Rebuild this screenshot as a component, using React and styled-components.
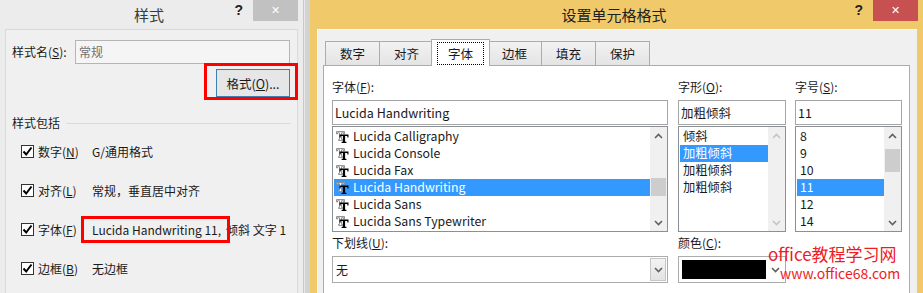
import React from "react";
import styled, { createGlobalStyle } from "styled-components";

const GlobalStyle = createGlobalStyle`
  html, body { margin: 0; padding: 0; }
  body {
    width: 923px;
    height: 293px;
    overflow: hidden;
    font-family: "Noto Sans CJK SC", "Noto Sans", sans-serif;
    font-size: 12px;
    color: #1a1a1a;
  }
`;

const fontList = [
  "Lucida Calligraphy",
  "Lucida Console",
  "Lucida Fax",
  "Lucida Handwriting",
  "Lucida Sans",
  "Lucida Sans Typewriter",
];
const styleList = ["倾斜", "加粗倾斜", "加粗倾斜", "加粗倾斜"];
const sizeList = ["8", "9", "10", "11", "12", "14"];
const tabs = ["数字", "对齐", "字体", "边框", "填充", "保护"];

function Chevron({ up, color = "#606060" }) {
  return (
    <svg width="9" height="6" viewBox="0 0 9 6">
      <polyline
        points={up ? "1,5 4.5,1.5 8,5" : "1,1 4.5,4.5 8,1"}
        fill="none"
        stroke={color}
        strokeWidth="1.6"
      />
    </svg>
  );
}

function TrueTypeIcon() {
  return (
    <svg width="13" height="12" viewBox="0 0 13 12">
      <path d="M0.5 0.5h8v2.5h-1v-1.3h-2v6.8h1v1h-4v-1h1V1.7h-2V3h-1z" fill="#fff" stroke="#8a8a8a" strokeWidth="0.9" />
      <path d="M3.5 3.5h9v3h-1.2V5h-2.2v5.8h1.3V12H5.6v-1.2h1.3V5H4.7v1.5H3.5z" fill="#000" />
    </svg>
  );
}

function CheckBox() {
  return (
    <Box>
      <svg width="11" height="11" viewBox="0 0 11 11">
        <polyline points="1.5,5.5 4.2,8.5 9.5,1.5" fill="none" stroke="#000" strokeWidth="2" />
      </svg>
    </Box>
  );
}

function ScrollBar({ thumbTop, thumbHeight, disabled }) {
  const c = disabled ? "#c4c4c4" : "#606060";
  return (
    <Scroll>
      <ScrollArrow>
        <Chevron up color={c} />
      </ScrollArrow>
      <Track>
        {!disabled && <Thumb style={{ marginTop: thumbTop, height: thumbHeight }} />}
      </Track>
      <ScrollArrow>
        <Chevron color={c} />
      </ScrollArrow>
    </Scroll>
  );
}

export default function App() {
  return (
    <>
      <GlobalStyle />
      <Screen>
        <LeftWin>
          <TitleBar>
            <Title $color="#3a3a3a">样式</Title>
            <Controls>
              <Help>?</Help>
              <Close $bg="#c1c1c1">✕</Close>
            </Controls>
          </TitleBar>
          <LeftPanel>
            <NameRow>
              <NameLabel>
                样式名(<u>S</u>):
              </NameLabel>
              <NameInput>常规</NameInput>
            </NameRow>
            <ButtonRow>
              <RedFrame $pad="3px 5px 0 9px">
                <FormatButton>
                  格式(<u>O</u>)...
                </FormatButton>
              </RedFrame>
            </ButtonRow>
            <SectionHead>
              <span>样式包括</span>
              <Rule />
            </SectionHead>
            <CheckRow>
              <CheckBox />
              <CheckLabel>
                数字(<u>N</u>)
              </CheckLabel>
              <Value>G/通用格式</Value>
            </CheckRow>
            <CheckRow>
              <CheckBox />
              <CheckLabel>
                对齐(<u>L</u>)
              </CheckLabel>
              <Value>常规，垂直居中对齐</Value>
            </CheckRow>
            <CheckRow>
              <CheckBox />
              <CheckLabel>
                字体(<u>F</u>)
              </CheckLabel>
              <Value>
                <RedFrame $pad="0 0 0 8px" $shift>
                  Lucida Handwriting 11,
                </RedFrame>
                <Rest>倾斜 文字 1</Rest>
              </Value>
            </CheckRow>
            <CheckRow>
              <CheckBox />
              <CheckLabel>
                边框(<u>B</u>)
              </CheckLabel>
              <Value>无边框</Value>
            </CheckRow>
          </LeftPanel>
        </LeftWin>
        <SheetStrip />
        <RightWin>
          <TitleBar>
            <Title $color="#1e1e1e">设置单元格格式</Title>
            <Controls>
              <Help>?</Help>
              <Close $bg="#c75050">✕</Close>
            </Controls>
          </TitleBar>
          <DialogBody>
            <TabRow>
              {tabs.map((t) => (
                <Tab key={t} $active={t === "字体"}>
                  {t === "字体" ? <Focus>{t}</Focus> : t}
                </Tab>
              ))}
            </TabRow>
            <TabPanel>
              <Columns>
                <Column $w={336}>
                  <FieldLabel>
                    字体(<u>F</u>):
                  </FieldLabel>
                  <TextBox>Lucida Handwriting</TextBox>
                  <ListBox>
                    <Items>
                      {fontList.map((f, i) => (
                        <Item key={f} $sel={i === 3} $icon>
                          <TrueTypeIcon />
                          <span>{f}</span>
                        </Item>
                      ))}
                    </Items>
                    <ScrollBar thumbTop={34} thumbHeight={18} />
                  </ListBox>
                </Column>
                <Column $w={108}>
                  <FieldLabel>
                    字形(<u>O</u>):
                  </FieldLabel>
                  <TextBox>加粗倾斜</TextBox>
                  <ListBox>
                    <Items>
                      {styleList.map((s, i) => (
                        <Item key={i} $sel={i === 1}>
                          {s}
                        </Item>
                      ))}
                    </Items>
                    <ScrollBar disabled />
                  </ListBox>
                </Column>
                <Column $w={107}>
                  <FieldLabel>
                    字号(<u>S</u>):
                  </FieldLabel>
                  <TextBox>11</TextBox>
                  <ListBox>
                    <Items>
                      {sizeList.map((s) => (
                        <Item key={s} $sel={s === "11"}>
                          {s}
                        </Item>
                      ))}
                    </Items>
                    <ScrollBar thumbTop={5} thumbHeight={23} />
                  </ListBox>
                </Column>
              </Columns>
              <BottomRow>
                <Column $w={336}>
                  <BottomLabel>
                    下划线(<u>U</u>):
                  </BottomLabel>
                  <Select>
                    <SelectText>无</SelectText>
                    <DropButton>
                      <Chevron />
                    </DropButton>
                  </Select>
                </Column>
                <Column $w={108}>
                  <BottomLabel>
                    颜色(<u>C</u>):
                  </BottomLabel>
                  <Select>
                    <Swatch />
                    <DropButton $plain>
                      <Chevron />
                    </DropButton>
                  </Select>
                </Column>
              </BottomRow>
            </TabPanel>
          </DialogBody>
        </RightWin>
        <Watermark>
          <WmMain>office教程学习网</WmMain>
          <WmUrl>www.office68.com</WmUrl>
        </Watermark>
      </Screen>
    </>
  );
}

const Screen = styled.div`
  position: relative;
  display: flex;
  width: 923px;
  height: 293px;
  overflow: hidden;
`;

const LeftWin = styled.div`
  width: 303px;
  background: #ececec;
  border-right: 1px solid #c8c8c8;
  display: flex;
  flex-direction: column;
`;

const TitleBar = styled.div`
  height: 29px;
  flex: none;
  display: grid;
  grid-template-columns: 1fr auto 1fr;
  padding-right: 5px;
`;

const Title = styled.div`
  grid-column: 2;
  font-size: 15px;
  line-height: 29px;
  color: ${(p) => p.$color};
`;

const Controls = styled.div`
  grid-column: 3;
  justify-self: end;
  display: flex;
  align-items: flex-start;
`;

const Help = styled.div`
  font-family: "Liberation Sans", sans-serif;
  font-weight: bold;
  font-size: 14px;
  line-height: 20px;
  color: #222;
  margin-right: 10px;
`;

const Close = styled.div`
  width: 45px;
  height: 21px;
  background: ${(p) => p.$bg};
  color: #fff;
  font-family: "DejaVu Sans", sans-serif;
  font-size: 11px;
  font-weight: bold;
  display: flex;
  align-items: center;
  justify-content: center;
`;

const LeftPanel = styled.div`
  flex: 1;
  margin: 0 5px 0 5px;
  background: #f0f0f0;
  border: 1px solid #d9d9d9;
  border-bottom: none;
`;

const NameRow = styled.div`
  display: flex;
  align-items: center;
  margin-top: 10px;
  padding-left: 6px;
`;

const NameLabel = styled.div`
  width: 63px;
  line-height: 24px;
`;

const NameInput = styled.div`
  width: 215px;
  height: 24px;
  box-sizing: border-box;
  border: 1px solid #b5b5b5;
  background: #f5f5f5;
  color: #707070;
  padding-left: 3px;
  line-height: 22px;
`;

const ButtonRow = styled.div`
  display: flex;
  justify-content: flex-end;
  margin: -1px -1px 0 0;
`;

const RedFrame = styled.div`
  display: inline-flex;
  align-items: center;
  border: 3px solid #ff0000;
  padding: ${(p) => p.$pad};
  ${(p) =>
    p.$shift
      ? "margin-left: -11px; width: 135px; height: 21px; position: relative; z-index: 1; white-space: nowrap; overflow: visible;"
      : ""}
`;

const FormatButton = styled.div`
  width: 74px;
  height: 28px;
  box-sizing: border-box;
  border: 1px solid #3c7fb1;
  background: #e6e6e6;
  display: flex;
  align-items: center;
  justify-content: center;
  font-size: 12.5px;
`;

const SectionHead = styled.div`
  display: flex;
  align-items: center;
  gap: 6px;
  margin: 14px 6px 0 6px;
  line-height: 18px;
`;

const Rule = styled.div`
  flex: 1;
  height: 1px;
  background: #dadada;
`;

const CheckRow = styled.div`
  display: flex;
  align-items: center;
  height: 39px;
  padding-left: 15px;
  white-space: nowrap;
`;

const Box = styled.div`
  width: 13px;
  height: 13px;
  box-sizing: border-box;
  border: 1px solid #333;
  background: #fff;
  display: flex;
  align-items: center;
  justify-content: center;
`;

const CheckLabel = styled.div`
  width: 54px;
  margin-left: 4px;
  line-height: 18px;
`;

const Value = styled.div`
  display: flex;
  align-items: center;
  line-height: 18px;
`;

const Rest = styled.span`
  margin-left: -4px;
`;

const SheetStrip = styled.div`
  width: 5px;
  background: #d3d3d3;
  border-left: 1px solid #e8e8e8;
`;

const RightWin = styled.div`
  flex: 1;
  background: #f0c96b;
  display: flex;
  flex-direction: column;
`;

const DialogBody = styled.div`
  flex: 1;
  margin: 0 6px 0 7px;
  background: #f0f0f0;
  border-top: 1px solid #f8f8f8;
  border-left: 1px solid #f8f8f8;
  padding: 9px 7px 0 5px;
  display: flex;
  flex-direction: column;
`;

const TabRow = styled.div`
  display: flex;
  align-items: flex-end;
  height: 26px;
  padding-left: 2px;
`;

const Tab = styled.div`
  width: 55px;
  box-sizing: border-box;
  margin-right: -1px;
  height: ${(p) => (p.$active ? "27px" : "24px")};
  border: 1px solid #acacac;
  border-bottom: none;
  background: ${(p) => (p.$active ? "#fff" : "linear-gradient(#f2f2f2, #e4e4e4)")};
  display: flex;
  align-items: center;
  justify-content: center;
  font-size: 12.5px;
  ${(p) =>
    p.$active
      ? "position: relative; z-index: 1; margin: 0 -3px -1px -2px; width: 59px;"
      : ""}
`;

const Focus = styled.span`
  outline: 1px dotted #000;
  padding: 1px 10px;
  line-height: 19px;
`;

const TabPanel = styled.div`
  flex: 1;
  background: #fff;
  border: 1px solid #acacac;
  border-bottom: none;
  padding: 11px 0 0 8px;
`;

const Columns = styled.div`
  display: flex;
  gap: 10px;
  & > :last-child {
    margin-left: -1px;
  }
`;

const Column = styled.div`
  width: ${(p) => p.$w}px;
  display: flex;
  flex-direction: column;
`;

const FieldLabel = styled.div`
  line-height: 20px;
  margin-bottom: 3px;
`;

const TextBox = styled.div`
  height: 25px;
  box-sizing: border-box;
  border: 1px solid #a5a5a5;
  padding-left: 2px;
  line-height: 23px;
  font-size: 12.5px;
`;

const ListBox = styled.div`
  margin-top: 1px;
  height: 106px;
  box-sizing: border-box;
  border: 1px solid #8b8f96;
  display: flex;
  overflow: hidden;
`;

const Items = styled.div`
  flex: 1;
  padding: 1px 0 0 1px;
`;

const Item = styled.div`
  height: 17px;
  line-height: 17px;
  padding-left: ${(p) => (p.$icon ? "2px" : "3px")};
  display: flex;
  align-items: center;
  gap: 4px;
  white-space: nowrap;
  font-size: 12.3px;
  background: ${(p) => (p.$sel ? "#3399ff" : "transparent")};
  color: ${(p) => (p.$sel ? "#fff" : "#1a1a1a")};
`;

const Scroll = styled.div`
  width: 17px;
  background: #f0f0f0;
  display: flex;
  flex-direction: column;
`;

const ScrollArrow = styled.div`
  height: 17px;
  display: flex;
  align-items: center;
  justify-content: center;
`;

const Track = styled.div`
  flex: 1;
  display: flex;
  flex-direction: column;
  align-items: center;
`;

const Thumb = styled.div`
  width: 15px;
  background: #cdcdcd;
`;

const BottomRow = styled.div`
  display: flex;
  gap: 10px;
  margin-top: 2px;
`;

const BottomLabel = styled.div`
  line-height: 18px;
  margin-bottom: 4px;
`;

const Select = styled.div`
  height: 27px;
  box-sizing: border-box;
  border: 1px solid #acacac;
  background: #fff;
  display: flex;
  align-items: stretch;
`;

const SelectText = styled.div`
  flex: 1;
  padding-left: 3px;
  line-height: 25px;
`;

const DropButton = styled.div`
  width: ${(p) => (p.$plain ? "19px" : "16px")};
  margin: ${(p) => (p.$plain ? "0" : "1px")};
  box-sizing: border-box;
  border: ${(p) => (p.$plain ? "none" : "1px solid #c6c6c6")};
  background: ${(p) => (p.$plain ? "#fff" : "linear-gradient(#f3f3f3, #e3e3e3)")};
  display: flex;
  align-items: center;
  justify-content: center;
`;

const Swatch = styled.div`
  flex: 1;
  margin: 3px 0 3px 3px;
  background: #000;
`;

const Watermark = styled.div`
  position: absolute;
  left: 768px;
  top: 244px;
  color: #ee1c25;
  font-family: "Noto Sans CJK SC", sans-serif;
`;

const WmMain = styled.div`
  font-size: 17px;
  line-height: 20px;
`;

const WmUrl = styled.div`
  font-size: 14px;
  line-height: 18px;
  margin-left: 12px;
`;
